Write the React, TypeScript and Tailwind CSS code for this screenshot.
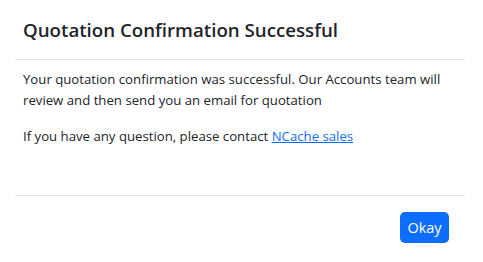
export default function App() {
  return (
    <div className="h-[262px] w-[483px] bg-white pl-[15px] pr-[18px] font-['Open_Sans',sans-serif] text-[#212529]">
      <div className="flex h-[60px] items-center border-b border-[#dee2e6] px-2">
        <h5 className="text-[18.7px] font-semibold leading-[30px]">Quotation Confirmation Successful</h5>
      </div>
      <div className="h-[135px] px-2 pt-[9px] text-[13.2px] leading-[21px]">
        <p className="mb-[15px]">
          Your quotation confirmation was successful. Our Accounts team will review and then send you an
          email for quotation
        </p>
        <p>
          If you have any question, please contact{" "}
          <a href="#" className="text-[#0d6efd] underline">
            NCache sales
          </a>
        </p>
      </div>
      <div className="flex justify-end border-t border-[#dee2e6] pt-4 pr-4">
        <button
          type="button"
          className="h-[31px] w-[49px] rounded-[5px] bg-[#0d6efd] text-[14.5px] text-white"
        >
          Okay
        </button>
      </div>
    </div>
  );
}
